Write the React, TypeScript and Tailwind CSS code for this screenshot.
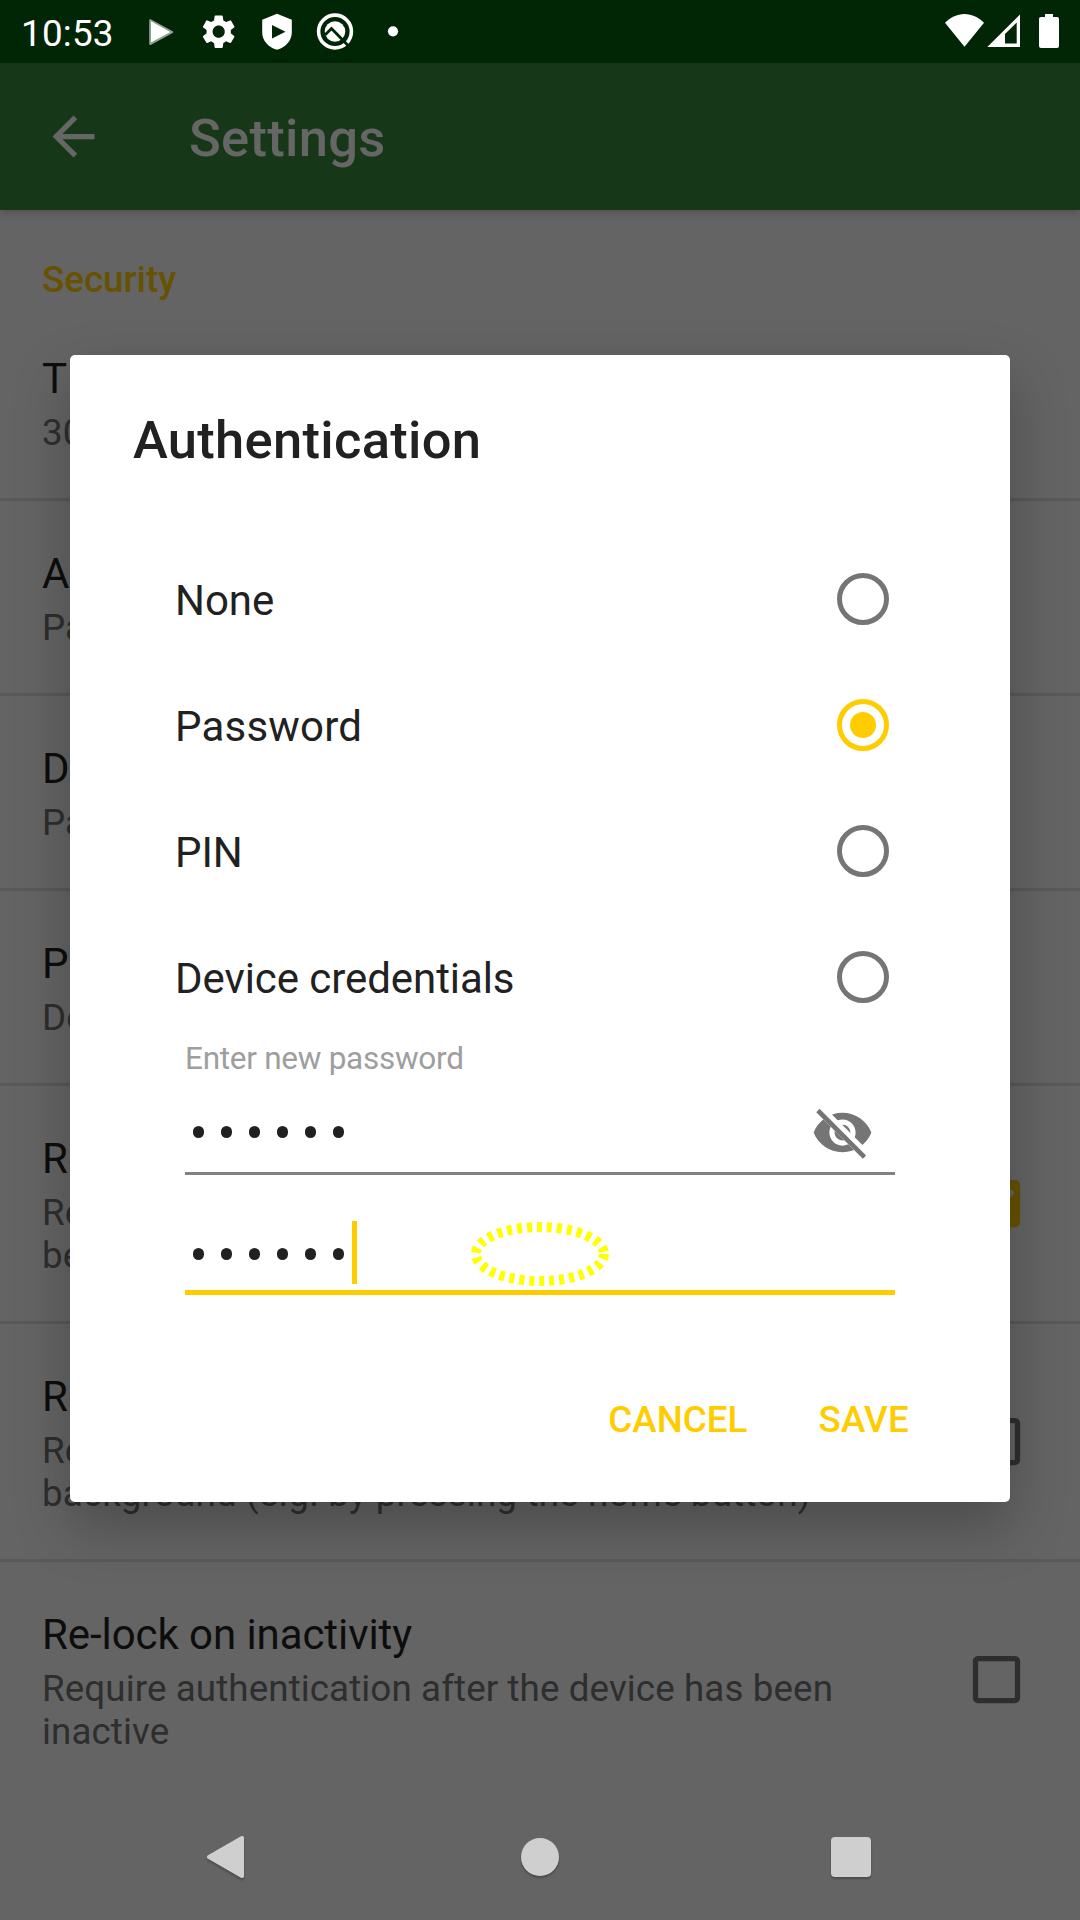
import React from "react";

const ARROW = "M20 11H7.83l5.59-5.59L12 4l-8 8 8 8 1.41-1.41L7.83 13H20v-2z";
const GEAR =
  "M19.14 12.94c.04-.3.06-.61.06-.94 0-.32-.02-.64-.07-.94l2.03-1.58a.49.49 0 0 0 .12-.61l-1.92-3.32a.488.488 0 0 0-.59-.22l-2.39.96c-.5-.38-1.03-.7-1.62-.94l-.36-2.54a.484.484 0 0 0-.48-.41h-3.84c-.24 0-.43.17-.47.41l-.36 2.54c-.59.24-1.13.57-1.62.94l-2.39-.96c-.22-.08-.47 0-.59.22L2.74 8.87c-.12.21-.08.47.12.61l2.03 1.58c-.05.3-.09.63-.09.94s.02.64.07.94l-2.03 1.58a.49.49 0 0 0-.12.61l1.92 3.32c.12.22.37.29.59.22l2.39-.96c.5.38 1.03.7 1.62.94l.36 2.54c.05.24.24.41.48.41h3.84c.24 0 .44-.17.47-.41l.36-2.54c.59-.24 1.13-.56 1.62-.94l2.39.96c.22.08.47 0 .59-.22l1.92-3.32c.12-.22.07-.47-.12-.61l-2.01-1.58zM12 15.6c-1.98 0-3.6-1.62-3.6-3.6s1.62-3.6 3.6-3.6 3.6 1.62 3.6 3.6-1.62 3.6-3.6 3.6z";
const CHECKED =
  "M19 3H5c-1.11 0-2 .9-2 2v14c0 1.1.89 2 2 2h14c1.11 0 2-.9 2-2V5c0-1.1-.89-2-2-2zm-9 14l-5-5 1.41-1.41L10 14.17l7.59-7.59L19 8l-9 9z";
const UNCHECKED =
  "M19 5v14H5V5h14m0-2H5c-1.1 0-2 .9-2 2v14c0 1.1.9 2 2 2h14c1.1 0 2-.9 2-2V5c0-1.1-.9-2-2-2z";
const EYE =
  "M12,4.5C7,4.5 2.73,7.61 1,12c1.73,4.39 6,7.5 11,7.5s9.27,-3.11 11,-7.5c-1.73,-4.39 -6,-7.5 -11,-7.5zM12,17c-2.76,0 -5,-2.24 -5,-5s2.24,-5 5,-5 5,2.24 5,5 -2.24,5 -5,5zM12,9c-1.66,0 -3,1.34 -3,3s1.34,3 3,3 3,-1.34 3,-3 -1.34,-3 -3,-3z";

function StatusBar() {
  return (
    <div className="flex h-[63px] shrink-0 items-start bg-[#002606] text-white">
      <div className="ml-[21px] w-[128px] pt-[12px] text-[36.75px] leading-[43px] tracking-[0.25px]">10:53</div>
      <svg className="h-[63px] w-[250px]" viewBox="149 0 250 63" fill="#fff">
        <path d="M150.2 20.2v23.8l22-11.9z" fill="#fff" stroke="#8fa393" strokeWidth="2" strokeLinejoin="round" />
        <path d="M151 21.3v21l18.6-10.5z" />
        <g transform="translate(198.4 11.4) scale(1.69)">
          <path d={GEAR} />
        </g>
        <path
          fillRule="evenodd"
          d="M277 13.7l14.8 6v12.8c0 8-6.3 15-14.8 17.3c-8.5-2.3-14.8-9.3-14.8-17.3v-12.8zM272 25v13.5l13.5-6.8z"
        />
        <circle cx="335" cy="31.5" r="16.4" fill="none" stroke="#fff" strokeWidth="3.6" />
        <circle cx="335" cy="31.5" r="10.3" />
        <path d="M325 35l6.5-6.5L350 47.5" fill="none" stroke="#002606" strokeWidth="2.8" />
        <circle cx="393" cy="31.3" r="5.1" />
      </svg>
      <svg className="ml-auto h-[63px] w-[140px]" viewBox="940 0 140 63" fill="#fff">
        <path d="M964.5 46.7L945 22.8C950 17.5 957 14 964.5 14S979 17.5 984 22.8z" />
        <path fillRule="evenodd" d="M987.3 47L1020 14.5V47zM1005 43.5h11.7V22.5L1005 34z" />
        <path d="M1045 14h8v3h4a2 2 0 0 1 2 2v27a2 2 0 0 1-2 2h-16a2 2 0 0 1-2-2v-27a2 2 0 0 1 2-2h4z" />
      </svg>
    </div>
  );
}

type RowProps = { title: string; summary: string; check?: "on" | "off"; last?: boolean; wide?: boolean };

function SettingRow({ title, summary, check, last, wide }: RowProps) {
  return (
    <div className={last ? "flex shrink-0 items-center" : "flex shrink-0 items-center border-b-[3px] border-[#595959]"}>
      <div className="w-[900px] pt-[48px] pb-[44px] pl-[42px]">
        <div
          className={
            last
              ? "text-[42px] leading-[49px] tracking-[-0.07px] text-[#0d0d0d]"
              : "text-[42px] leading-[49px] tracking-[0.4px] text-[#0d0d0d]"
          }
        >
          {title}
        </div>
        <div
          className={
            wide
              ? "mt-[8px] text-[36.75px] leading-[43px] tracking-[0.17px] whitespace-pre-line text-[#2e2e2e]"
              : "mt-[8px] text-[36.75px] leading-[43px] tracking-[0.1px] whitespace-pre-line text-[#2e2e2e]"
          }
        >
          {summary}
        </div>
      </div>
      {check && (
        <svg className="mr-[52.4px] mb-[1px] ml-auto size-[63px]" viewBox="0 0 24 24" fill={check === "on" ? "#665200" : "#2e2e2e"}>
          <path d={check === "on" ? CHECKED : UNCHECKED} />
        </svg>
      )}
    </div>
  );
}

function Option({ label, selected }: { label: string; selected?: boolean }) {
  return (
    <div className="flex h-[126px] items-center justify-between pr-[121px] pl-[105px]">
      <div className={selected ? "pt-[3px] text-[42px] leading-[49px] tracking-[0.2px]" : "pt-[3px] text-[42px] leading-[49px] tracking-[-0.07px]"}>
        {label}
      </div>
      <div
        className={
          selected
            ? "flex size-[52px] items-center justify-center rounded-full border-[5px] border-[#ffcc00]"
            : "size-[52px] rounded-full border-[5px] border-[#757575]"
        }
      >
        {selected && <div className="size-[26px] rounded-full bg-[#ffcc00]" />}
      </div>
    </div>
  );
}

function Dots() {
  return (
    <div className="flex gap-[17px] pl-[8px]" aria-label="password">
      {[0, 1, 2, 3, 4, 5].map((i) => (
        <div key={i} className="h-[12px] w-[11px] rounded-full bg-[#212121]" />
      ))}
    </div>
  );
}

function AuthDialog() {
  return (
    <div className="absolute top-[355px] left-[70px] flex h-[1147px] w-[940px] flex-col rounded-[5px] bg-white text-[#212121] shadow-[0_24px_56px_rgba(0,0,0,0.25)]">
      <div className="h-[181px] pt-[54px] pl-[63px] text-[52.5px] leading-[62px] font-medium tracking-[0.3px]">Authentication</div>
      <Option label="None" />
      <Option label="Password" selected />
      <Option label="PIN" />
      <Option label="Device credentials" />
      <div className="mx-[115px] flex h-[255px] flex-col">
        <div className="h-[46px] text-[31.5px] leading-[37px] tracking-[-0.27px] text-[#9e9e9e]">Enter new password</div>
        <div className="flex h-[89px] items-start justify-between border-b-[3px] border-[#828282]">
          <div className="pt-[40px]">
            <Dots />
          </div>
          <svg className="mt-[15px] mr-[21px] size-[63px]" viewBox="0 0 24 24">
            <mask id="strike">
              <rect width="24" height="24" fill="#fff" />
              <path d="M2 4.27L19.73 22l2.54-2.54L4.54 1.73z" fill="#000" />
            </mask>
            <path d={EYE} fill="#757575" fillRule="evenodd" mask="url(#strike)" />
            <path d="M3.27 4.27L19.74 20.74" stroke="#757575" strokeWidth="1.8" strokeLinecap="square" />
          </svg>
        </div>
        <div className="relative flex h-[120px] items-start border-b-[5px] border-[#ffcc00]">
          <div className="pt-[73px]">
            <Dots />
          </div>
          <div className="mt-[46px] ml-[8px] h-[63px] w-[5px] bg-[#ffcc00]" />
          <svg className="absolute top-[44px] left-[280px] h-[70px] w-[150px]" viewBox="465 1219 150 70">
            <ellipse cx="539.9" cy="1254" rx="64" ry="27" fill="none" stroke="#ffff00" strokeWidth="10" strokeDasharray="5 5" />
          </svg>
        </div>
      </div>
      <div className="mt-auto flex h-[126px] justify-end gap-[71px] pt-[22px] pr-[101px] text-[36.75px] leading-[43px] font-medium text-[#ffcc00]">
        <div>CANCEL</div>
        <div className="tracking-[0.25px]">SAVE</div>
      </div>
    </div>
  );
}

function NavBar() {
  return (
    <div className="flex flex-1 items-center justify-between pr-[209px] pb-[3px] pl-[206px]">
      <svg className="h-[46px] w-[39px] drop-shadow-[0_2px_1px_rgba(0,0,0,0.25)]" viewBox="0 0 39 46">
        <path d="M3 23L36 4v38z" fill="#cfcfcf" stroke="#cfcfcf" strokeWidth="4" strokeLinejoin="round" />
      </svg>
      <div className="ml-[3px] size-[38px] rounded-full bg-[#cfcfcf] shadow-[0_2px_2px_rgba(0,0,0,0.25)]" />
      <div className="size-[40px] rounded-[4px] bg-[#cfcfcf] shadow-[0_2px_2px_rgba(0,0,0,0.25)]" />
    </div>
  );
}

export default function App() {
  return (
    <div className="relative flex h-[1920px] w-[1080px] flex-col overflow-hidden bg-[#646464] font-['Roboto',sans-serif]">
      <StatusBar />
      <div className="flex h-[147px] shrink-0 items-center bg-[#173818] pl-[42px] shadow-[0_3px_8px_rgba(0,0,0,0.2)]">
        <svg className="size-[63px]" viewBox="0 0 24 24" fill="#666666">
          <path d={ARROW} />
        </svg>
        <div className="ml-[84px] pt-[2px] text-[52.5px] leading-[62px] font-medium tracking-[0.3px] text-[#666666]">Settings</div>
      </div>
      <div className="h-[96px] shrink-0 pt-[48px] pl-[42px] text-[36.75px] leading-[43px] font-medium text-[#665200]">Security</div>
      <SettingRow title="Timeout" summary="30 seconds" />
      <SettingRow title="Authentication" summary="Password" />
      <SettingRow title="Database encryption" summary="Password / PIN" />
      <SettingRow title="Panic trigger" summary="Default action" />
      <SettingRow
        title="Re-lock on screen off"
        summary={"Require authentication after the screen has\nbeen turned off"}
        check="on"
      />
      <SettingRow
        title="Re-lock when in background"
        summary={"Require authentication after going to the\nbackground (e.g. by pressing the home button)"}
        check="off"
        wide
      />
      <SettingRow
        title="Re-lock on inactivity"
        summary={"Require authentication after the device has been\ninactive"}
        check="off"
        last
      />
      <NavBar />
      <AuthDialog />
    </div>
  );
}
